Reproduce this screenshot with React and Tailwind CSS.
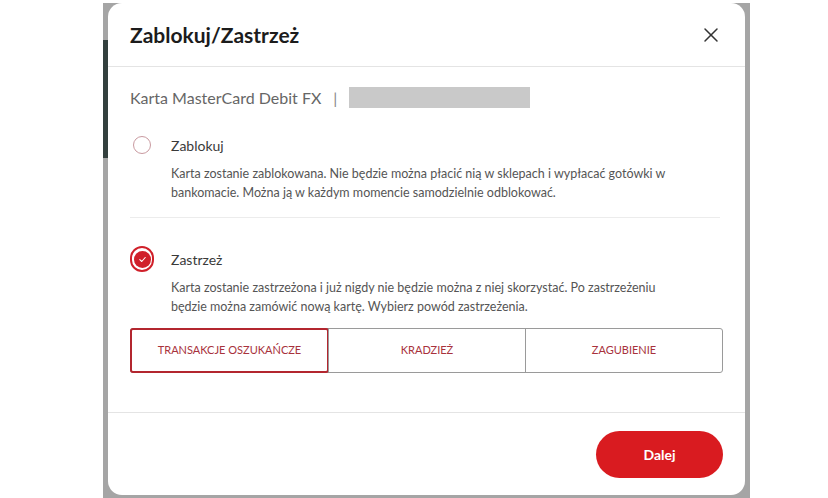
import { X } from 'lucide-react';

const reasons = ['TRANSAKCJE OSZUKAŃCZE', 'KRADZIEŻ', 'ZAGUBIENIE'];

function Radio({ checked }) {
  if (!checked) {
    return <div className="w-[18px] h-[18px] rounded-full border-[1.5px] border-[#c99aa0] bg-white" />;
  }
  return (
    <div className="w-[26px] h-[26px] rounded-full border-2 border-[#d0202a] flex items-center justify-center bg-white">
      <div className="w-[17px] h-[17px] rounded-full bg-[#d0202a] flex items-center justify-center">
        <svg width="9" height="9" viewBox="0 0 10 10" fill="none">
          <path d="M2 5.2 L4.2 7.2 L8 2.8" stroke="#fff" strokeWidth="1.2" strokeLinecap="round" strokeLinejoin="round" />
        </svg>
      </div>
    </div>
  );
}

function Option({ checked, label, lines }) {
  return (
    <div className="flex gap-[17px]">
      <div className="w-[24px] h-[26px] flex items-center justify-center shrink-0">
        <Radio checked={checked} />
      </div>
      <div className="flex-1">
        <div className="h-[26px] flex items-center text-[14px] text-[#3a3a3a]">{label}</div>
        <div className="mt-[6px] text-[12.5px] leading-[19px] text-[#555]">
          {lines.map((l) => (
            <div key={l} className="whitespace-nowrap">{l}</div>
          ))}
        </div>
      </div>
    </div>
  );
}

export default function App() {
  return (
    <div className="w-[828px] h-[498px] bg-white pl-[103px] pt-[3px] overflow-hidden" style={{ fontFamily: 'Lato, "Open Sans", sans-serif' }}>
      <div className="w-[647px] h-[495px] bg-[#a5a5a5] flex">
        <div className="w-[5px] shrink-0 flex flex-col">
          <div className="mt-[37px] h-[118px] bg-[#33403e]" />
        </div>
        <div className="flex-1 h-[492px] bg-white rounded-[14px] flex flex-col">
          <div className="h-[64px] flex items-center justify-between pl-[22px] pr-[22px] border-b border-[#e4e4e4]">
            <h1 className="text-[21px] font-bold text-[#1c1c1c]">Zablokuj/Zastrzeż</h1>
            <X size={24} strokeWidth={1.5} className="text-[#333]" />
          </div>
          <div className="px-[22px] flex-1">
            <div className="mt-[20px] flex items-center h-[21px]">
              <span className="text-[16px] text-[#666]">Karta MasterCard Debit FX</span>
              <span className="text-[16px] text-[#888] ml-[12px]">|</span>
              <div className="ml-[12px] w-[181px] h-[21px] bg-[#c9c9c9]" />
            </div>
            <div className="mt-[24px]">
              <Option
                checked={false}
                label="Zablokuj"
                lines={[
                  'Karta zostanie zablokowana. Nie będzie można płacić nią w sklepach i wypłacać gotówki w',
                  'bankomacie. Można ją w każdym momencie samodzielnie odblokować.',
                ]}
              />
            </div>
            <div className="mt-[15px] mr-[3px] border-t border-[#ececec]" />
            <div className="mt-[28px]">
              <Option
                checked
                label="Zastrzeż"
                lines={[
                  'Karta zostanie zastrzeżona i już nigdy nie będzie można z niej skorzystać. Po zastrzeżeniu',
                  'będzie można zamówić nową kartę. Wybierz powód zastrzeżenia.',
                ]}
              />
            </div>
            <div className="mt-[12px] w-[593px] h-[45px] grid grid-cols-3 border border-[#9a9a9a] rounded-[3px]">
              {reasons.map((r, i) => (
                <div
                  key={r}
                  className={
                    i === 0
                      ? '-m-[1px] border-2 border-[#b3262f] rounded-[3px] flex items-center justify-center text-[11px] text-[#a8323c]'
                      : 'border-l border-[#9a9a9a] flex items-center justify-center text-[11px] text-[#a8323c]'
                  }
                >
                  {r}
                </div>
              ))}
            </div>
          </div>
          <div className="border-t border-[#e4e4e4] h-[83px] flex items-center justify-end pr-[22px]">
            <button className="w-[127px] h-[47px] rounded-full bg-[#d91b20] text-white font-bold text-[14px]">
              Dalej
            </button>
          </div>
        </div>
        <div className="w-[5px] shrink-0" />
      </div>
    </div>
  );
}
